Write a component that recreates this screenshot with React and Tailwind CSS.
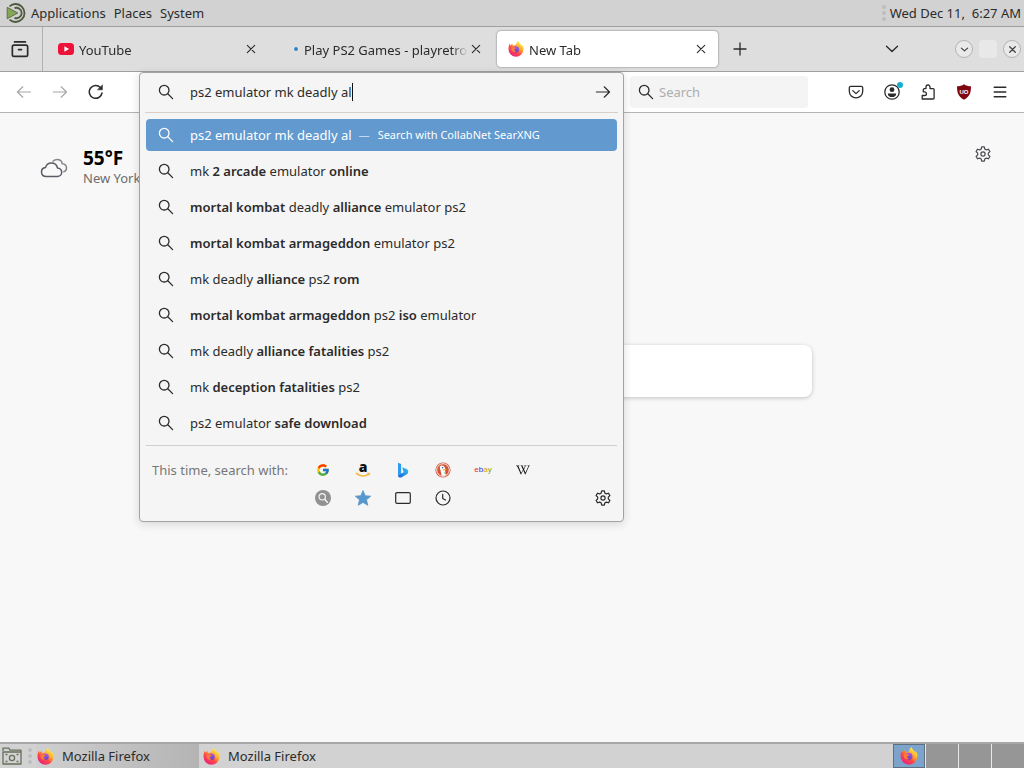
import React, { useState } from "react";
import { FaWikipediaW } from "react-icons/fa";
import { FcGoogle } from "react-icons/fc";

function Icon({ children, className = "size-4", sw = 1.2 }) {
  return (
    <svg viewBox="0 0 16 16" className={className} fill="none" stroke="currentColor" strokeWidth={sw} strokeLinecap="round" strokeLinejoin="round" aria-hidden="true">
      {children}
    </svg>
  );
}

const SearchIcon = () => (
  <Icon sw={1.3}>
    <circle cx="6.2" cy="6.2" r="4.8" />
    <path d="M9.8 9.8 14.6 14.6" />
  </Icon>
);

const CloseIcon = () => (
  <Icon sw={1.1}>
    <path d="M4.3 4.3l7.4 7.4M11.7 4.3L4.3 11.7" />
  </Icon>
);

const ArrowIcon = () => (
  <Icon>
    <path d="M1.3 8h13.2M9.2 2.8 14.5 8l-5.3 5.2" />
  </Icon>
);

const GearIcon = () => (
  <Icon className="size-4">
    <circle cx="8" cy="8" r="2.1" />
    <path d="M6.7 .9h2.6l.5 2.1 1.5.9 2.1-.7 1.5 2.3-1.6 1.6v1.8l1.6 1.6-1.5 2.3-2.1-.7-1.5.9-.5 2.1H6.7L6.2 13l-1.5-.9-2.1.7-1.5-2.3 1.6-1.6V7.1L1.1 5.5l1.5-2.3 2.1.7L6.2 3z" />
  </Icon>
);

function FirefoxLogo({ id, className = "size-4" }) {
  return (
    <svg viewBox="0 0 16 16" className={className} aria-hidden="true">
      <defs>
        <linearGradient id={`${id}-body`} x1="0.8" y1="0.1" x2="0.2" y2="0.95">
          <stop offset="0" stopColor="#fff04a" />
          <stop offset="0.35" stopColor="#ffa32b" />
          <stop offset="0.6" stopColor="#ff4a48" />
          <stop offset="1" stopColor="#e6207e" />
        </linearGradient>
        <linearGradient id={`${id}-globe`} x1="0.6" y1="0" x2="0.4" y2="1">
          <stop offset="0" stopColor="#b05bdd" />
          <stop offset="1" stopColor="#5c3fc4" />
        </linearGradient>
      </defs>
      <path fill={`url(#${id}-body)`} d="M15.1 5.5c-.3-.8-1-1.6-1.6-1.9.5.9.7 1.7.8 2.3C13.4 3.8 11.9 2.9 10.7 1c-.1-.2-.2-.4-.2-.9C8.7 1.1 8 2.8 7.9 3.900c-.9.1-1.700.4-2.400.9-.8-.2-1.200-1.100-1-2.100-1 .4-1.700 1.200-2.200 1.800-.4-.4-.3-1.900-.3-2.200C1 3.200.5 5.600.5 8.300a7.500 7.500 0 0 0 15 0c.1-1 0-2-.4-2.800z" />
      <circle cx="8" cy="8.300" r="3.100" fill={`url(#${id}-globe)`} />
      <path fill="#ff7a35" d="M3.200 6.600c1-.9 2.200-.7 3-.2.9.1 1.800.2 1.800.7-.1.900-1.400.9-1.700 1.500-.2 1 .8 1.800 2.200 1.500-1.200 1.500-4.300 1-4.900-1-.3-.9-.4-1.700-.4-2.500z" />
    </svg>
  );
}

function MateLogo() {
  return (
    <svg viewBox="0 0 20 20" className="size-5" fill="none" aria-hidden="true">
      <path d="M3.500 3.300A9 9 0 1 1 3.500 16.700" stroke="#4d5a3c" strokeWidth="1.800" />
      <path d="M8.500 5.200a5.200 5.200 0 1 1 0 9.600" stroke="#4d5a3c" strokeWidth="1.800" />
      <path d="M1.200 4.300 11.800 10 1.200 15.700z" fill="#87a556" stroke="#5d6f47" strokeWidth="1" />
    </svg>
  );
}

function Tab({ title, icon, active }) {
  return (
    <div className={`flex h-9 min-w-0 flex-[0_1_221px] items-center rounded pr-[9px] pl-[11px] ${active ? "bg-white shadow-[0_0_2px_rgba(0,0,0,0.55)]" : ""}`}>
      <button className="flex min-w-0 flex-1 items-center gap-[5px]" role="tab" aria-selected={!!active}>
        <span className="flex size-4 shrink-0 items-center">{icon}</span>
        <span className="min-w-0 flex-1 overflow-hidden pt-0.5 text-left whitespace-nowrap [mask-image:linear-gradient(to_right,black_90%,transparent)]">{title}</span>
      </button>
      <button aria-label={`Close ${title}`} className="size-4 shrink-0"><CloseIcon /></button>
    </div>
  );
}

const suggestions = [
  [["mk "], ["2 arcade", 1], [" emulator "], ["online", 1]],
  [["mortal kombat", 1], [" deadly "], ["alliance", 1], [" emulator ps2"]],
  [["mortal kombat armageddon", 1], [" emulator ps2"]],
  [["mk deadly "], ["alliance", 1], [" ps2 "], ["rom", 1]],
  [["mortal kombat armageddon", 1], [" ps2 "], ["iso", 1], [" emulator"]],
  [["mk deadly "], ["alliance fatalities", 1], [" ps2"]],
  [["mk "], ["deception fatalities", 1], [" ps2"]],
  [["ps2 emulator "], ["safe download", 1]],
];

const engines = [
  ["Google", <FcGoogle className="size-[14px]" />],
  ["Amazon", (
    <svg viewBox="0 0 16 16" className="size-4 overflow-visible">
      <text x="8" y="10" textAnchor="middle" fontSize="14" fontWeight="800" fontFamily="Open Sans, sans-serif" fill="#111">a</text>
      <path d="M1.500 11.400c3.500 3.300 9 3.300 12.200.7" fill="none" stroke="#f6b63d" strokeWidth="1.600" strokeLinecap="round" />
      <path d="M12.200 11.200h2.500l-.6 2.200" fill="none" stroke="#f6b63d" strokeWidth="1" />
    </svg>
  )],
  ["Bing", (
    <svg viewBox="0 0 16 16" className="size-4">
      <defs>
        <linearGradient id="bing-tail" x1="1" y1="0" x2="0" y2="1">
          <stop offset="0" stopColor="#35c8ee" />
          <stop offset="1" stopColor="#1b5fd6" />
        </linearGradient>
      </defs>
      <path d="M3 .8 6.100 2v9.600L3 14z" fill="#2a9df0" />
      <path d="M7.200 5.200 11.600 7c1.600.8 2 2.600 1.300 4.100-.5 1.100-1.300 1.500-6.100 4.100C5 16.100 3 15.300 3 13.400l3.100-1.800 3.300-1.500-1-.6z" fill="url(#bing-tail)" />
    </svg>
  )],
  ["DuckDuckGo", (
    <svg viewBox="0 0 16 16" className="size-4">
      <circle cx="8" cy="8" r="7.600" fill="#d2553a" />
      <circle cx="8" cy="8" r="6.300" fill="none" stroke="#fff" strokeWidth=".9" />
      <path d="M5 4.200c1.300-1.200 4.600-.8 5 2 .2 1.300-.1 2.200.2 3.200l.8 3.500c-1.300.9-3 1.100-4.300.8L5.500 8.200C5 6.800 4.600 5.200 5 4.200z" fill="#fff" />
      <path d="M8 7.600c1.300-.6 2.700-.6 3.600-.2-.8.600-1.800 1-3.300 1.300z" fill="#f9b82c" />
      <circle cx="7.600" cy="5.800" r=".7" fill="#29507a" />
      <path d="M8.600 10.800l2.400-.6v2.100z" fill="#65b54a" />
    </svg>
  )],
  ["eBay", (
    <svg viewBox="0 0 16 16" className="size-4 overflow-visible">
      <text x="8" y="10" textAnchor="middle" fontSize="8" fontFamily="Liberation Sans, sans-serif">
        <tspan fill="#e53238">e</tspan><tspan fill="#3a2fd2">b</tspan><tspan fill="#d8a000">a</tspan><tspan fill="#77a800">y</tspan>
      </text>
    </svg>
  )],
  ["Wikipedia", <FaWikipediaW className="size-[14px] text-[#111]" />],
];

const localSources = [
  ["CollabNet SearXNG", (
    <svg viewBox="0 0 16 16" className="size-4" fill="none">
      <circle cx="8" cy="8" r="8" fill="#919191" />
      <circle cx="7.200" cy="6.800" r="3.200" stroke="#f5f5f5" strokeWidth="1.200" />
      <path d="m9.600 9.300 2.700 2.900" stroke="#f5f5f5" strokeWidth="1.500" strokeLinecap="round" />
    </svg>
  )],
  ["Bookmarks", (
    <svg viewBox="0 0 16 16" className="size-4">
      <path d="M8 .6l2.200 5.100 5.500.5-4.200 3.600 1.300 5.500L8 12.400l-4.800 2.900 1.300-5.500L.3 6.200l5.500-.5z" fill="#5897cb" stroke="#5897cb" strokeWidth=".8" strokeLinejoin="round" />
    </svg>
  )],
  ["Tabs", <Icon><rect x=".7" y="2.600" width="14.600" height="10.800" rx="1.300" /></Icon>],
  ["History", <Icon><circle cx="8" cy="8" r="7" /><path d="M7.700 4.300v4.200l2.800 1.500" /></Icon>],
];

function AddressBar() {
  const [query, setQuery] = useState("ps2 emulator mk deadly al");
  return (
    <div className="relative h-10 min-w-0 flex-1">
      <section className="absolute inset-x-0 top-0 z-10 rounded border border-[#a3a3a3] bg-[#f5f5f5] px-1.5 shadow-[0_2px_10px_rgba(0,0,0,0.14)]">
        <div className="-mx-px flex h-10 items-center border-b border-[#d8d0c6] pr-[7px] pb-0.5 pl-[13px]">
          <SearchIcon />
          <div className="ml-4 flex min-w-0 flex-1 items-center">
            <input aria-label="Address" value={query} onChange={(e) => setQuery(e.target.value)} className="h-6 max-w-full bg-transparent caret-transparent outline-none [field-sizing:content]" />
            <span className="h-[18px] w-px bg-[#111]" />
          </div>
          <button aria-label="Go"><ArrowIcon /></button>
        </div>
        <ul className="mt-1.5 flex flex-col gap-1">
          <li>
            <button className="flex h-8 w-full items-center rounded bg-[#6299cf] pl-3 text-white">
              <SearchIcon />
              <span className="ml-4">ps2 emulator mk deadly al</span>
              <span className="ml-[7px] text-[11px] opacity-70">—</span>
              <span className="ml-2 truncate text-[11px]">Search with CollabNet SearXNG</span>
            </button>
          </li>
          {suggestions.map((parts, i) => (
            <li key={i}>
              <button className="flex h-8 w-full items-center rounded pl-3">
                <SearchIcon />
                <span className="ml-4 truncate whitespace-pre">
                  {parts.map(([text, bold], j) => bold ? <b key={j} className="font-semibold">{text}</b> : <span key={j}>{text}</span>)}
                </span>
              </button>
            </li>
          ))}
        </ul>
        <footer className="mt-1.5 flex border-t border-[#cfcfcf] pt-[10px] pb-[9px] pl-1.5">
          <span className="w-[151px] shrink-0 leading-7 text-[#777]">This time, search with:</span>
          <div className="flex-1">
            {[engines, localSources].map((row, i) => (
              <div key={i} className="flex h-7">
                {row.map(([name, icon]) => (
                  <button key={name} aria-label={name} className="flex w-10 items-center justify-center">{icon}</button>
                ))}
              </div>
            ))}
          </div>
          <button aria-label="Search settings" className="mr-1.5 flex h-7 items-center self-end"><GearIcon /></button>
        </footer>
      </section>
    </div>
  );
}

function ToolButton({ label, children, className = "" }) {
  return <button aria-label={label} className={`flex h-8 w-9 shrink-0 items-center justify-center ${className}`}>{children}</button>;
}

function WindowButton({ label, children }) {
  return (
    <button aria-label={label} className="flex size-[18px] items-center justify-center rounded-full border border-[#b4b4b4] bg-[#e9e9e9] text-[#444]">
      <Icon className="size-[9px]" sw={2.2}>{children}</Icon>
    </button>
  );
}

export default function App() {
  return (
    <div className="flex min-h-screen flex-col bg-[#f8f8f8] font-['Noto_Sans',sans-serif] text-[13px] leading-5 text-[#2b2b2b]">
      <header className="flex h-[27px] items-center border-b border-[#a0a0a0] bg-[#d2d2d2] pr-[3px] pl-1.5">
        <MateLogo />
        <nav className="ml-[5px] flex gap-2">
          <button>Applications</button>
          <button>Places</button>
          <button>System</button>
        </nav>
        <span className="ml-auto h-4 border-l-4 border-dotted border-[#bdbdbd]" />
        <time className="ml-1">Wed Dec 11,&nbsp; 6:27 AM</time>
      </header>

      <div className="flex h-[45px] items-center border-b border-[#a0a0a0] bg-[#dedede]">
        <button aria-label="Recent browsing" className="flex h-full w-[43px] shrink-0 items-center justify-center border-r border-[#b0b0b0] pr-0.5">
          <Icon className="size-[18px]" sw={1.5}>
            <path d="M3.200 1.700h9.600" />
            <rect x="1.200" y="4.500" width="13.600" height="10" rx="1.500" />
            <path d="M6.700 8.500h2.600" />
          </Icon>
        </button>
        <div role="tablist" className="ml-1 flex min-w-0 flex-1 items-center gap-1">
          <Tab title="YouTube" icon={
            <svg viewBox="0 0 16 16" className="size-4" aria-hidden="true">
              <rect y="2" width="16" height="12" rx="3.500" fill="#ed1237" />
              <path d="M6.400 5.200v5.600L11 8z" fill="#fff" />
            </svg>
          } />
          <Tab title="Play PS2 Games - playretrog" icon={<span className="mr-px ml-auto size-1 rounded-full bg-[#2f83c4] shadow-[0_0_2px_#fff]" />} />
          <Tab title="New Tab" active icon={<FirefoxLogo id="tab-fx" />} />
          <button aria-label="New tab" className="ml-2.5 shrink-0">
            <Icon sw={1.3}><path d="M8 2v12M2 8h12" /></Icon>
          </button>
        </div>
        <button aria-label="List all tabs" className="mr-[55px] shrink-0"><Icon sw={1.4}><path d="M2.500 5.300 8 10.500l5.500-5.200" /></Icon></button>
        <div className="mr-[3px] flex shrink-0 items-center gap-1.5">
          <WindowButton label="Minimize"><path d="M2.500 5.500 8 10.500l5.500-5" /></WindowButton>
          <button aria-label="Maximize" className="size-[18px] rounded bg-[#e8e8e8]" />
          <WindowButton label="Close window"><path d="M3 3l10 10M13 3 3 13" /></WindowButton>
        </div>
      </div>

      <div className="flex h-[41px] items-center border-b border-[#b4b4b4] bg-white px-1.5">
        <ToolButton label="Back" className="text-[#a6a6a6]"><Icon><path d="M14.500 8H1.300M6.800 2.800 1.500 8l5.300 5.200" /></Icon></ToolButton>
        <ToolButton label="Forward" className="text-[#a6a6a6]"><ArrowIcon /></ToolButton>
        <ToolButton label="Reload">
          <Icon sw={1.5}>
            <path d="M14 9A6.400 6.400 0 1 1 12.400 3.600" />
            <path d="M14.400 1.200v4.600H9.800z" fill="currentColor" strokeWidth=".6" />
          </Icon>
        </ToolButton>
        <div className="flex min-w-0 flex-1 pr-[30px] pl-[25px]">
          <AddressBar />
          <label className="mt-1 ml-1.5 flex h-8 w-[178px] shrink-0 items-center gap-[5px] rounded bg-[#f4f4f4] pl-2">
            <SearchIcon />
            <input aria-label="Search" placeholder="Search" className="min-w-0 flex-1 bg-transparent outline-none placeholder:text-[#adadad]" />
          </label>
        </div>
        <ToolButton label="Save to Pocket">
          <Icon sw={1.3}>
            <path d="M2.800 2.300h10.400c.9 0 1.500.6 1.500 1.500v3.400a6.700 6.700 0 0 1-13.400 0V3.800c0-.9.600-1.500 1.500-1.500z" />
            <path d="M4.800 6.600 8 9.600l3.200-3" />
          </Icon>
        </ToolButton>
        <ToolButton label="Account" className="relative">
          <Icon sw={1.3}>
            <circle cx="8" cy="8" r="7.200" />
            <circle cx="8" cy="5.700" r="2.400" fill="currentColor" stroke="none" />
            <path d="M3.800 9.400h8.400c0 2.500-1.900 3.700-4.200 3.700s-4.200-1.200-4.200-3.700z" fill="currentColor" stroke="none" />
          </Icon>
          <span className="absolute top-1.5 right-[7px] size-1.5 rounded-full bg-[#18aed0]" />
        </ToolButton>
        <ToolButton label="Extensions">
          <Icon sw={1.3}>
            <path d="M2.200 15h10.900c.6 0 1-.4 1-1V5.600c0-.6-.4-1-1-1H10V3a2 2 0 0 0-4 0v1.600H4.300c-.6 0-1 .4-1 1v2.200h1.300a1.800 1.800 0 0 1 0 3.700H2.200z" />
          </Icon>
        </ToolButton>
        <ToolButton label="uBlock Origin">
          <svg viewBox="0 0 16 16" className="size-4" aria-hidden="true">
            <path d="M8 .3c2 1.500 4.200 2 7 2-.1 6.500-.8 9.900-7 13.500C1.800 12.200 1.100 8.800 1 2.300c2.800 0 5-.5 7-2z" fill="#800711" />
            <text x="8" y="9.600" textAnchor="middle" fontSize="6" fontWeight="700" fontFamily="Liberation Sans, sans-serif" fill="#fff">UO</text>
          </svg>
        </ToolButton>
        <ToolButton label="Menu"><Icon sw={1.400}><path d="M2.200 3.200h11.600M2.200 8h11.600M2.200 12.800h11.600" /></Icon></ToolButton>
      </div>

      <main className="flex flex-1 flex-col">
        <div className="flex items-start pt-[33px] pr-[33px] pl-10">
          <svg viewBox="0 0 28 20" className="mt-3 h-5 w-7" fill="none" stroke="#5b5b66" strokeWidth="1.500" strokeLinejoin="round" aria-label="Cloudy">
            <path d="M6.500 18.500C3.500 18.500 1.500 16.600 1.500 14c0-2.300 1.700-4.100 4-4.400C6.300 6.700 8.600 5 11.400 5c3.200 0 5.500 2 6 4.900 2.500.1 4.300 2 4.300 4.300 0 2.400-1.900 4.300-4.500 4.300z" />
            <path d="M12.500 3.600C13.600 2.100 15.100 1.400 17 1.400c2.800 0 4.900 1.800 5.300 4.400 2.500.2 4.200 2 4.200 4.200 0 2-1.200 3.500-3.200 4" stroke="#85858d" />
          </svg>
          <div className="ml-[15px]">
            <p className="text-[19px] font-bold leading-6 text-black">55°F</p>
            <p className="leading-4 text-[#6c6c6c]">New York</p>
          </div>
          <button aria-label="Personalize new tab" className="ml-auto text-[#4a4a4f]"><GearIcon /></button>
        </div>
        <div className="mt-[159px] flex justify-center px-6">
          <div className="h-[52px] w-full max-w-[600px] rounded-lg bg-white shadow-[0_1px_4px_rgba(0,0,0,0.22)]" />
        </div>
      </main>

      <footer className="flex h-[26px] items-stretch border-t-2 border-[#a8a8a8] bg-[#d2d2d2]">
        <button aria-label="Show desktop" className="flex w-6 items-center pl-0.5">
          <svg viewBox="0 0 20 20" className="size-5" fill="none" stroke="#66705a" strokeWidth="1.300" strokeLinejoin="round" aria-hidden="true">
            <path d="M1 5V2.200h6l1 2h11V6M1 6h18v12H1z" />
            <circle cx="10" cy="12" r="2.600" />
            <path d="M3.500 8.500h2M14.500 8.500h2M3.500 15.500h2M14.500 15.500h2" />
          </svg>
        </button>
        <span className="mx-1 my-1 border-l-4 border-dotted border-[#bdbdbd]" />
        <button className="flex w-[163px] items-center gap-2 bg-linear-to-r from-[#cfcfcf] to-[#b4b4b4] pl-px"><FirefoxLogo id="task-a" className="size-[17px]" />Mozilla Firefox</button>
        <button className="ml-1 flex items-center gap-2"><FirefoxLogo id="task-b" className="size-[17px]" />Mozilla Firefox</button>
        <div className="ml-auto flex gap-px bg-[#e8e8e8]">
          <button aria-label="Workspace 1" className="flex w-8 items-center justify-center border border-[#5f6f80] bg-[#7ba3cb]"><FirefoxLogo id="ws-fx" className="size-[18px]" /></button>
          <button aria-label="Workspace 2" className="w-8 bg-[#969696]" />
          <button aria-label="Workspace 3" className="w-8 bg-[#969696]" />
          <button aria-label="Workspace 4" className="w-8 bg-[#969696]" />
        </div>
      </footer>
    </div>
  );
}
